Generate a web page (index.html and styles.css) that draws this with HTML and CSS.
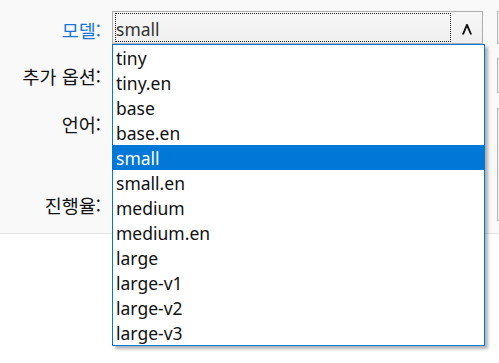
FILE: index.html
```html
<!DOCTYPE html>
<html lang="ko">
<head>
<meta charset="UTF-8">
<title>모델 선택</title>
<link rel="stylesheet" href="styles.css">
</head>
<body>

<div class="window">
  <div class="form">
    <label class="form-label active">모델:</label>
    <div class="field">
      <div class="combo">
        <span class="combo-value">small</span>
        <span class="combo-focus"></span>
        <span class="combo-arrow">
          <svg width="10" height="11" viewBox="0 0 10 11"><polyline points="0.9,10.5 5,0.9 9.1,10.5" fill="none" stroke="#111" stroke-width="1.9"/></svg>
        </span>
      </div>
      <!-- open dropdown list of the combobox -->
      <ul class="dropdown">
        <li>tiny</li>
        <li>tiny.en</li>
        <li>base</li>
        <li>base.en</li>
        <li class="selected">small</li>
        <li>small.en</li>
        <li>medium</li>
        <li>medium.en</li>
        <li>large</li>
        <li>large-v1</li>
        <li>large-v2</li>
        <li>large-v3</li>
      </ul>
    </div>
    <div class="side"></div>

    <label class="form-label">추가 옵션:</label>
    <div class="field"><div class="box"></div></div>
    <div class="side"></div>

    <label class="form-label top">언어:</label>
    <div class="field"><div class="box"></div></div>
    <div class="side tall"></div>

    <label class="form-label low">진행율:</label>
    <div class="field"><div class="box"></div></div>
  </div>
</div>

<div class="footer"></div>

</body>
</html>
```

FILE: styles.css
```css
/* --- Basic Setup --- */
html, body {
  margin: 0;
  overflow: hidden;
}

body {
  font-family: "Noto Sans", "Noto Sans CJK KR", sans-serif;
  color: #000;
  background-color: #fff;
  width: 499px;
  height: 363px;
}

/* --- Upper panel with the form --- */
.window {
  box-sizing: border-box;
  height: 234px;
  padding-top: 11px;
  background-color: #f9f9f9;
  border-bottom: 1px solid #e3e3e3;
}

.form {
  display: grid;
  grid-template-columns: 101px 371px 5px;
  grid-template-rows: 33px 35px 67px 30px;
  column-gap: 11px;
  row-gap: 14px;
}

.form-label {
  font-family: "Noto Sans CJK KR", "Noto Sans", sans-serif;
  font-size: 18.5px;
  line-height: 24px;
  text-align: right;
  align-self: center;
  color: #111;
}

.form-label.active {
  color: #1a78d4;
  padding-top: 4px;
}

.form-label.top {
  align-self: start;
  padding-top: 5px;
}

.form-label.low {
  padding-top: 4px;
}

.field {
  position: relative;
}

/* --- Combobox --- */
.combo {
  position: relative;
  box-sizing: border-box;
  height: 33px;
  border: 1px solid #adadad;
  background: linear-gradient(#f7f7f7, #efefef);
}

.combo-value {
  position: absolute;
  left: 3px;
  top: 5px;
  font-size: 17.5px;
  color: #333;
}

.combo-focus {
  position: absolute;
  left: 2px;
  top: 1px;
  right: 31px;
  bottom: 1px;
  border: 1px dotted #222;
}

.combo-arrow {
  position: absolute;
  right: 10px;
  top: 12px;
  line-height: 0;
}

/* --- Open dropdown list --- */
.dropdown {
  position: absolute;
  left: 0;
  top: 33px;
  z-index: 5;
  box-sizing: border-box;
  width: 373px;
  margin: 0;
  padding: 0;
  list-style: none;
  background-color: #fff;
  border: 1px solid #0078d7;
  box-shadow: 3px 3px 3px rgba(0, 0, 0, 0.3);
}

.dropdown li {
  height: 23px;
  padding-top: 2px;
  line-height: 23px;
  padding-left: 3px;
  font-size: 17.5px;
  color: #111;
}

.dropdown li.selected {
  background-color: #0078d7;
  color: #fff;
}

/* --- Hidden controls behind the list --- */
.box {
  height: 100%;
  background-color: #fff;
}

.side {
  margin-left: 3px;
  box-sizing: border-box;
  border: 1px solid #b5b5b5;
  border-right: none;
  background-color: #f0f0f0;
}

.side.tall {
  grid-row: span 2;
  margin-top: 1px;
  margin-bottom: -3px;
}

.footer {
  height: 129px;
}
```
